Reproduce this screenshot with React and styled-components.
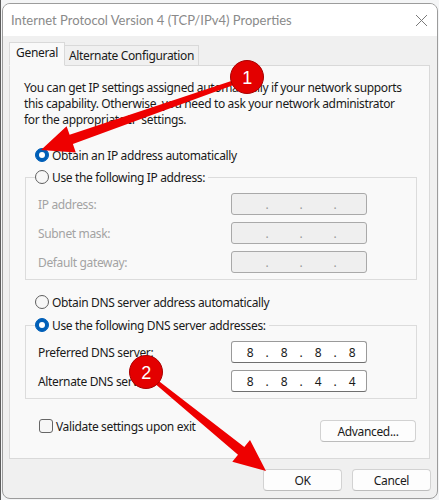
import React from 'react';
import styled, { createGlobalStyle } from 'styled-components';

const Global = createGlobalStyle`
  html, body { margin: 0; padding: 0; }
  body {
    background: #eceef0;
    font-family: "Noto Sans", "Open Sans", sans-serif;
    letter-spacing: -0.35px;
    width: 439px;
    height: 500px;
    overflow: hidden;
  }
`;

const Stage = styled.div`
  position: relative;
  width: 439px;
  height: 500px;
  box-sizing: border-box;
  padding: 3px 1px 1px 1px;
  border-left: 1px solid #5d5d5d;
  background: #f4f5f6;
`;

const Window = styled.div`
  width: 436px;
  height: 496px;
  box-sizing: border-box;
  border: 1px solid #9c9c9c;
  border-radius: 8px;
  overflow: hidden;
  background: #f0f0f0;
  display: flex;
  flex-direction: column;
`;

const TitleBar = styled.div`
  height: 32px;
  flex: none;
  background: #ffffff;
  display: flex;
  align-items: center;
  justify-content: space-between;
  padding: 0 9px 0 8px;
`;

const Title = styled.span`
  font-family: Lato, "Noto Sans", sans-serif;
  font-size: 13px;
  color: #8a8a8a;
  letter-spacing: 0;
`;

const Body = styled.div`
  flex: 1;
  display: flex;
  flex-direction: column;
  padding: 6px 7px 0 6px;
`;

const TabRow = styled.div`
  display: flex;
  align-items: flex-end;
  margin-bottom: -1px;
  position: relative;
  z-index: 1;
`;

const Tab = styled.div`
  box-sizing: border-box;
  font-size: 12px;
  color: #1a1a1a;
  white-space: nowrap;
  border: 1px solid #d9d9d9;
  display: flex;
  align-items: center;
  justify-content: center;
  background: ${p => (p.$active ? '#f9f9f9' : '#f0f0f0')};
  border-bottom-color: ${p => (p.$active ? '#f9f9f9' : '#d9d9d9')};
  border-left-width: ${p => (p.$active ? '1px' : '0')};
  height: ${p => (p.$active ? '24px' : '21px')};
  width: ${p => p.$w}px;
  padding-bottom: ${p => (p.$active ? '3px' : '0')};
`;

const Panel = styled.div`
  box-sizing: border-box;
  height: 394px;
  background: #f9f9f9;
  border: 1px solid #d9d9d9;
  padding: 14px 12px 0 14px;
  display: flex;
  flex-direction: column;
`;

const Para = styled.p`
  margin: 0;
  font-size: 12px;
  line-height: 16px;
  color: #1a1a1a;
  white-space: nowrap;
`;

const OptionRow = styled.label`
  display: flex;
  align-items: center;
  gap: 3px;
  height: 16px;
  font-size: 12px;
  color: #1a1a1a;
  margin-top: ${p => p.$mt}px;
  margin-left: ${p => p.$ml ?? 11}px;
  white-space: nowrap;
`;

const RadioDot = styled.span`
  box-sizing: border-box;
  width: 14px;
  height: 14px;
  border-radius: 50%;
  flex: none;
  display: flex;
  align-items: center;
  justify-content: center;
  border: ${p => (p.$on ? '1px solid #005fb8' : '1px solid #5f5f5f')};
  background: ${p => (p.$on ? '#005fb8' : '#f7f7f7')};
  &::after {
    content: '';
    width: 6px;
    height: 6px;
    border-radius: 50%;
    background: #ffffff;
    display: ${p => (p.$on ? 'block' : 'none')};
  }
`;

const Group = styled.fieldset`
  margin: ${p => p.$mt}px 0 0 1px;
  padding: 0 49px 6px 12px;
  border: 1px solid #dcdcdc;
  min-width: 0;
`;

const Legend = styled.legend`
  padding: 0 3px 0 0;
  margin-left: -3px;
  height: 16px;
  display: flex;
  align-items: center;
  gap: 3px;
  font-size: 12px;
  color: #1a1a1a;
  white-space: nowrap;
`;

const FieldGrid = styled.div`
  display: grid;
  grid-template-columns: 1fr 136px;
  row-gap: 7px;
  margin-top: 8px;
  align-items: center;
`;

const FieldLabel = styled.span`
  font-size: 12px;
  color: ${p => (p.$disabled ? '#a3a3a3' : '#1a1a1a')};
  white-space: nowrap;
`;

const IpBox = styled.div`
  box-sizing: border-box;
  height: 22px;
  border: 1px solid ${p => (p.$disabled ? '#a9a9a9' : '#9a9a9a')};
  border-bottom-color: ${p => (p.$disabled ? '#a9a9a9' : '#6f6f6f')};
  border-radius: 3px;
  background: ${p => (p.$disabled ? '#efefef' : '#ffffff')};
  display: flex;
  align-items: center;
  padding-left: 4px;
  font-size: 12px;
  color: #1a1a1a;
`;

const Octet = styled.span`
  width: 28px;
  text-align: center;
`;

const Dot = styled.span`
  width: 6px;
  text-align: center;
  color: ${p => (p.$disabled ? '#9a9a9a' : '#1a1a1a')};
`;

const BottomRow = styled.div`
  display: flex;
  justify-content: space-between;
  align-items: flex-start;
  margin-top: 19px;
  padding-right: 1px;
`;

const Check = styled.span`
  box-sizing: border-box;
  width: 14px;
  height: 14px;
  border: 1px solid #666666;
  border-radius: 3px;
  background: #f6f6f6;
  flex: none;
`;

const Button = styled.button`
  box-sizing: border-box;
  width: ${p => p.$w}px;
  height: 22px;
  margin-top: ${p => p.$mt || 0}px;
  background: #fdfdfd;
  border: 1px solid #d2d2d2;
  border-bottom-color: #bcbcbc;
  border-radius: 4px;
  font-family: inherit;
  font-size: 12px;
  letter-spacing: -0.35px;
  color: #1a1a1a;
  padding: 0;
`;

const Footer = styled.div`
  display: flex;
  justify-content: flex-end;
  gap: 10px;
  margin-top: 10px;
  margin-right: -1px;
`;

const Overlay = styled.svg`
  position: absolute;
  left: 0;
  top: 0;
  pointer-events: none;
`;

function arrowPoints(x1, y1, x2, y2, tailW, neckW, headW, headL) {
  const dx = x2 - x1, dy = y2 - y1;
  const L = Math.hypot(dx, dy);
  const ux = dx / L, uy = dy / L;
  const px = -uy, py = ux;
  const bx = x2 - ux * headL, by = y2 - uy * headL;
  const pts = [
    [x1 + px * tailW / 2, y1 + py * tailW / 2],
    [bx + px * neckW / 2, by + py * neckW / 2],
    [bx + px * headW / 2, by + py * headW / 2],
    [x2, y2],
    [bx - px * headW / 2, by - py * headW / 2],
    [bx - px * neckW / 2, by - py * neckW / 2],
    [x1 - px * tailW / 2, y1 - py * tailW / 2],
  ];
  return pts.map(p => p.map(v => v.toFixed(1)).join(',')).join(' ');
}

function Radio({ on }) {
  return <RadioDot $on={on} />;
}

function Ip({ values, disabled }) {
  const v = values || ['', '', '', ''];
  return (
    <IpBox $disabled={disabled}>
      <Octet>{v[0]}</Octet><Dot $disabled={disabled}>.</Dot>
      <Octet>{v[1]}</Octet><Dot $disabled={disabled}>.</Dot>
      <Octet>{v[2]}</Octet><Dot $disabled={disabled}>.</Dot>
      <Octet>{v[3]}</Octet>
    </IpBox>
  );
}

export default function App() {
  return (
    <Stage>
      <Global />
      <Window>
        <TitleBar>
          <Title>Internet Protocol Version 4 (TCP/IPv4) Properties</Title>
          <svg width="13" height="13" viewBox="0 0 13 13">
            <path d="M1 1 L12 12 M12 1 L1 12" stroke="#7a7a7a" strokeWidth="1" fill="none" />
          </svg>
        </TitleBar>
        <Body>
          <TabRow>
            <Tab $active $w={56}>General</Tab>
            <Tab $w={134}>Alternate Configuration</Tab>
          </TabRow>
          <Panel>
            <Para>
              You can get IP settings assigned automatically if your network supports<br />
              this capability. Otherwise, you need to ask your network administrator<br />
              for the appropriate IP settings.
            </Para>
            <OptionRow $mt={19}>
              <Radio on />Obtain an IP address automatically
            </OptionRow>
            <Group $mt={6}>
              <Legend><Radio />Use the following IP address:</Legend>
              <FieldGrid>
                <FieldLabel $disabled>IP address:</FieldLabel>
                <Ip disabled />
                <FieldLabel $disabled>Subnet mask:</FieldLabel>
                <Ip disabled />
                <FieldLabel $disabled>Default gateway:</FieldLabel>
                <Ip disabled />
              </FieldGrid>
            </Group>
            <OptionRow $mt={14}>
              <Radio />Obtain DNS server address automatically
            </OptionRow>
            <Group $mt={7}>
              <Legend><Radio on />Use the following DNS server addresses:</Legend>
              <FieldGrid>
                <FieldLabel>Preferred DNS server:</FieldLabel>
                <Ip values={['8', '8', '8', '8']} />
                <FieldLabel>Alternate DNS server:</FieldLabel>
                <Ip values={['8', '8', '4', '4']} />
              </FieldGrid>
            </Group>
            <BottomRow>
              <OptionRow $mt={0} $ml={15}>
                <Check />Validate settings upon exit
              </OptionRow>
              <Button $w={96} $mt={2}>Advanced...</Button>
            </BottomRow>
          </Panel>
          <Footer>
            <Button $w={79}>OK</Button>
            <Button $w={79}>Cancel</Button>
          </Footer>
        </Body>
      </Window>
      <Overlay width="439" height="500" viewBox="0 0 439 500">
        <polygon points={arrowPoints(240, 80, 40, 150, 4, 10, 28, 32)} fill="#ee0000" />
        <polygon points={arrowPoints(148, 376, 265, 471, 4, 10, 28, 32)} fill="#ee0000" />
        <circle cx="246" cy="77" r="16.5" fill="#e30000" stroke="#a80000" strokeWidth="1" />
        <text x="246" y="83.5" textAnchor="middle" fill="#ffffff" fontSize="18" fontFamily="Liberation Sans, sans-serif">1</text>
        <circle cx="145" cy="372" r="16.5" fill="#e30000" stroke="#a80000" strokeWidth="1" />
        <text x="145" y="378.5" textAnchor="middle" fill="#ffffff" fontSize="18" fontFamily="Liberation Sans, sans-serif">2</text>
      </Overlay>
    </Stage>
  );
}
